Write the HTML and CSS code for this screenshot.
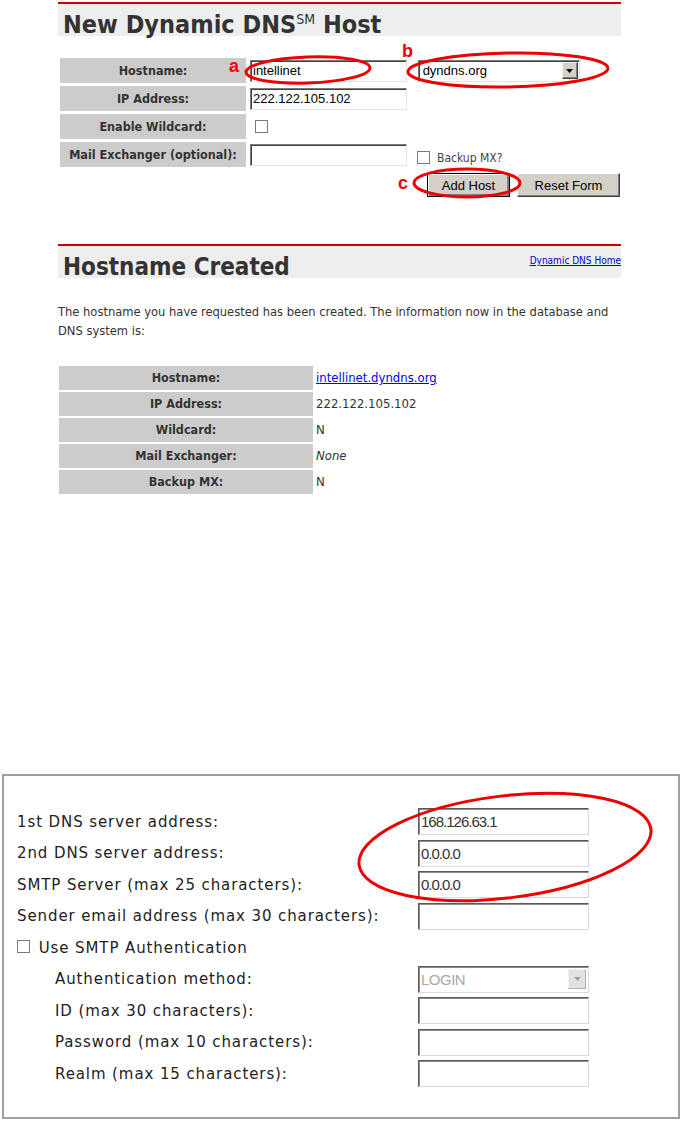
FILE: index.html
```html
<!DOCTYPE html>
<html lang="en">

<head>
    <meta charset="UTF-8">
    <meta name="viewport" content="width=device-width, initial-scale=1.0">
    <title>Dynamic DNS Host Setup</title>
    <link rel="stylesheet" href="styles.css">
</head>

<body>
    <div class="page">

        <div class="panel panel-new">
            <div class="title-bar">
                <h1>New Dynamic DNS<sup>SM</sup> Host</h1>
            </div>

            <form class="host-form">
                <div class="form-row">
                    <label class="cell-label">Hostname:</label>
                    <div class="cell-field">
                        <input class="text-box" type="text" value="intellinet">
                        <span class="dot">.</span>
                        <span class="select-box">
                            <span class="select-text">dyndns.org</span>
                            <span class="select-arrow"><svg width="7" height="4" viewBox="0 0 7 4"><path d="M0 0h7L3.5 4z" fill="#000"/></svg></span>
                        </span>
                    </div>
                </div>
                <div class="form-row">
                    <label class="cell-label">IP Address:</label>
                    <div class="cell-field">
                        <input class="text-box" type="text" value="222.122.105.102">
                    </div>
                </div>
                <div class="form-row">
                    <label class="cell-label">Enable Wildcard:</label>
                    <div class="cell-field">
                        <input class="chk chk-wildcard" type="checkbox">
                    </div>
                </div>
                <div class="form-row">
                    <label class="cell-label">Mail Exchanger (optional):</label>
                    <div class="cell-field">
                        <input class="text-box" type="text">
                        <input class="chk chk-backup" type="checkbox">
                        <span class="backup-text">Backup MX?</span>
                    </div>
                </div>
            </form>

            <div class="actions">
                <button class="btn btn-add" type="button">Add Host</button>
                <button class="btn btn-reset" type="button">Reset Form</button>
            </div>
        </div>

        <div class="panel panel-created">
            <div class="title-bar">
                <h1>Hostname Created</h1>
                <a class="home-link" href="#">Dynamic DNS Home</a>
            </div>

            <p class="intro">The hostname you have requested has been created. The information now in the database and DNS system is:</p>

            <div class="info-table">
                <div class="info-row">
                    <div class="cell-label">Hostname:</div>
                    <div class="info-value"><a href="#">intellinet.dyndns.org</a></div>
                </div>
                <div class="info-row">
                    <div class="cell-label">IP Address:</div>
                    <div class="info-value">222.122.105.102</div>
                </div>
                <div class="info-row">
                    <div class="cell-label">Wildcard:</div>
                    <div class="info-value">N</div>
                </div>
                <div class="info-row">
                    <div class="cell-label">Mail Exchanger:</div>
                    <div class="info-value"><em>None</em></div>
                </div>
                <div class="info-row">
                    <div class="cell-label">Backup MX:</div>
                    <div class="info-value">N</div>
                </div>
            </div>
        </div>

        <div class="mail-box">
            <div class="mail-row">
                <span class="mail-label">1st DNS server address:</span>
                <input class="mail-input" type="text" value="168.126.63.1">
            </div>
            <div class="mail-row">
                <span class="mail-label">2nd DNS server address:</span>
                <input class="mail-input" type="text" value="0.0.0.0">
            </div>
            <div class="mail-row">
                <span class="mail-label">SMTP Server (max 25 characters):</span>
                <input class="mail-input" type="text" value="0.0.0.0">
            </div>
            <div class="mail-row">
                <span class="mail-label">Sender email address (max 30 characters):</span>
                <input class="mail-input" type="text">
            </div>
            <div class="mail-row">
                <label class="mail-label auth-toggle"><input class="chk" type="checkbox"> Use SMTP Authentication</label>
            </div>
            <div class="mail-row">
                <span class="mail-label sub">Authentication method:</span>
                <span class="mail-select">
                    <span class="select-text">LOGIN</span>
                    <span class="select-arrow"><svg width="7" height="4" viewBox="0 0 7 4"><path d="M0 0h7L3.5 4z" fill="#a0a0a0"/></svg></span>
                </span>
            </div>
            <div class="mail-row">
                <span class="mail-label sub">ID (max 30 characters):</span>
                <input class="mail-input" type="text">
            </div>
            <div class="mail-row">
                <span class="mail-label sub">Password (max 10 characters):</span>
                <input class="mail-input" type="password">
            </div>
            <div class="mail-row">
                <span class="mail-label sub">Realm (max 15 characters):</span>
                <input class="mail-input" type="text">
            </div>
        </div>

        <!-- red hand-drawn markings over the screenshots -->
        <svg class="marks" width="682" height="1125" viewBox="0 0 682 1125">
            <g fill="none" stroke="#ee0000" stroke-width="3">
                <ellipse cx="308" cy="70" rx="62" ry="13" transform="rotate(-2 308 70)"/>
                <ellipse cx="508" cy="70" rx="100" ry="17" transform="rotate(-1 508 70)"/>
                <ellipse cx="467" cy="183" rx="53" ry="14"/>
                <ellipse cx="505" cy="847" rx="147" ry="51" transform="rotate(-7 505 847)"/>
            </g>
            <g fill="#ee0000" font-family="Liberation Sans, Arial, sans-serif" font-weight="bold" font-size="18">
                <text x="229" y="72">a</text>
                <text x="402" y="57">b</text>
                <text x="398" y="189">c</text>
            </g>
        </svg>
    </div>
</body>

</html>
```

FILE: styles.css
```css
body {
    margin: 0;
    font-family: "DejaVu Sans", sans-serif;
    color: #333;
    background-color: #fff;
}

.page {
    position: relative;
    height: 1125px;
    overflow: hidden;
}

.panel {
    width: 563px;
    margin-left: 58px;
}

.panel-new {
    padding-top: 2px;
}

.panel-created {
    margin-top: 47px;
}

.title-bar {
    display: flex;
    justify-content: space-between;
    align-items: flex-start;
    height: 32px;
    border-top: 2px solid #cc0000;
    background-color: #eeeeee;
}

h1 {
    margin: 0;
    padding-left: 5px;
    height: 32px;
    font-family: "DejaVu Sans Condensed", "DejaVu Sans", sans-serif;
    font-size: 24px;
    line-height: 43px;
    font-weight: bold;
    color: #333;
    white-space: nowrap;
}

.panel-new h1 {
    font-size: 25px;
    line-height: 42px;
}

h1 sup {
    font-size: 14px;
    font-weight: normal;
    line-height: 0;
    vertical-align: 9px;
}

.host-form {
    display: grid;
    row-gap: 3px;
    margin: 22px 0 0 2px;
}

.form-row {
    display: grid;
    grid-template-columns: 186px 1fr;
    column-gap: 4px;
    height: 25px;
}

.cell-label {
    background-color: #cccccc;
    font-family: "DejaVu Sans Condensed", "DejaVu Sans", sans-serif;
    font-size: 12.5px;
    font-weight: bold;
    line-height: 25px;
    text-align: center;
    color: #333;
}

.cell-field {
    display: flex;
    align-items: center;
}

.text-box {
    width: 157px;
    height: 22px;
    box-sizing: border-box;
    margin: 0;
    padding: 0 2px;
    border: 1px solid;
    border-color: #7a7a7a #e2e2e2 #e2e2e2 #7a7a7a;
    box-shadow: inset 1px 1px 0 #404040;
    font-family: "Liberation Sans", Arial, sans-serif;
    font-size: 13px;
    color: #000;
}

.dot {
    margin: 0 5px 0 2px;
    font-family: "Liberation Sans", Arial, sans-serif;
    font-size: 13px;
    line-height: 1;
    align-self: flex-end;
    padding-bottom: 5px;
}

.select-box {
    display: flex;
    align-items: center;
    justify-content: space-between;
    width: 162px;
    height: 22px;
    box-sizing: border-box;
    border: 1px solid;
    border-color: #7a7a7a #e2e2e2 #e2e2e2 #7a7a7a;
    box-shadow: inset 1px 1px 0 #404040;
    background-color: #fff;
    padding: 0 1px 0 4px;
}

.select-text {
    font-family: "Liberation Sans", Arial, sans-serif;
    font-size: 13px;
    color: #000;
}

.select-arrow {
    display: flex;
    align-items: center;
    justify-content: center;
    width: 16px;
    height: 17px;
    box-sizing: border-box;
    background-color: #d4d0c8;
    border: 1px solid;
    border-color: #f2f2f2 #404040 #404040 #f2f2f2;
    box-shadow: inset -1px -1px 0 #808080;
}

.chk {
    appearance: none;
    -webkit-appearance: none;
    width: 13px;
    height: 13px;
    margin: 0;
    box-sizing: border-box;
    border: 1px solid #7a7a7a;
    background-color: #fff;
    vertical-align: middle;
}

.chk-wildcard {
    margin-left: 5px;
}

.chk-backup {
    margin: 6px 0 0 10px;
}

.backup-text {
    margin: 6px 0 0 7px;
    font-family: "DejaVu Sans Condensed", "DejaVu Sans", sans-serif;
    font-size: 12px;
    color: #444;
}

.actions {
    display: flex;
    justify-content: flex-end;
    gap: 7px;
    margin-top: 6px;
    padding-right: 1px;
}

.btn {
    height: 24px;
    margin: 0;
    padding: 0;
    background-color: #d4d0c8;
    border: 1px solid;
    border-color: #fff #404040 #404040 #fff;
    box-shadow: inset -1px -1px 0 #808080;
    font-family: "Liberation Sans", Arial, sans-serif;
    font-size: 13px;
    color: #000;
}

.btn-add {
    width: 83px;
    border-color: #000;
    box-shadow: inset 1px 1px 0 #fff, inset -2px -2px 0 #808080;
}

.btn-reset {
    width: 103px;
}

.home-link {
    margin-top: 9px;
    font-family: "DejaVu Sans Condensed", "DejaVu Sans", sans-serif;
    font-size: 10px;
    color: #0000cc;
}

.intro {
    margin: 24px 0 0;
    font-family: "DejaVu Sans Condensed", "DejaVu Sans", sans-serif;
    font-size: 12.8px;
    line-height: 19px;
    color: #333;
}

.info-table {
    display: grid;
    row-gap: 2px;
    margin: 26px 0 0 1px;
}

.info-row {
    display: grid;
    grid-template-columns: 254px 1fr;
    column-gap: 3px;
    height: 24px;
}

.info-row .cell-label {
    line-height: 24px;
}

.info-value {
    font-family: "DejaVu Sans Condensed", "DejaVu Sans", sans-serif;
    font-size: 13px;
    line-height: 24px;
    color: #333;
}

.info-value a {
    color: #0000ee;
}

.mail-box {
    width: 678px;
    height: 345px;
    box-sizing: border-box;
    margin: 280px 0 0 2px;
    padding: 30px 0 0 13px;
    border: 2px solid #a0a0a0;
}

.mail-row {
    display: grid;
    grid-template-columns: 401px 171px;
    align-items: center;
    height: 31.5px;
}

.mail-label {
    font-size: 15px;
    letter-spacing: 0.9px;
    color: #222;
    white-space: nowrap;
}

.mail-label.sub {
    padding-left: 38px;
}

.auth-toggle .chk {
    margin: -3px 3px 0 0;
}

.mail-input,
.mail-select {
    width: 171px;
    height: 27px;
    box-sizing: border-box;
    margin: 0;
    padding: 0 2px;
    border: 1px solid;
    border-color: #5a5a5a #d8d8d8 #d8d8d8 #5a5a5a;
    box-shadow: inset 1px 1px 0 #8a8a8a;
    background-color: #fff;
    font-family: "Liberation Sans", Arial, sans-serif;
    font-size: 15px;
    letter-spacing: -1px;
    color: #333;
}

.mail-select {
    display: flex;
    align-items: center;
    justify-content: space-between;
    padding-right: 2px;
}

.mail-select .select-text {
    font-family: "Liberation Sans", Arial, sans-serif;
    font-size: 15px;
    letter-spacing: -0.5px;
    color: #a8a8a8;
}

.mail-select .select-arrow {
    height: 20px;
    width: 18px;
    border-color: #f2f2f2 #b0b0b0 #b0b0b0 #f2f2f2;
    box-shadow: none;
    background-color: #e4e2dc;
}

.marks {
    position: absolute;
    top: 0;
    left: 0;
    pointer-events: none;
}
```
